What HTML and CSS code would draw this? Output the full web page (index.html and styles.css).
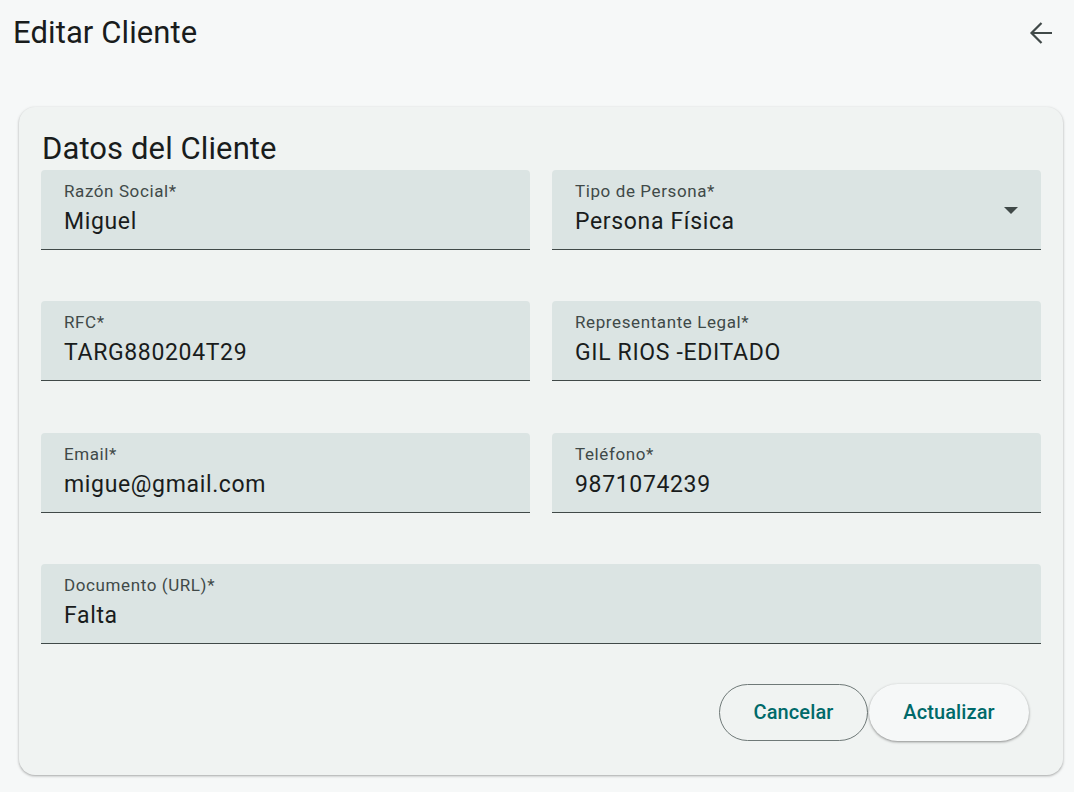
FILE: index.html
```html
<!DOCTYPE html>
<html lang="es">
<head>
<meta charset="utf-8">
<title>Editar Cliente</title>
<link rel="stylesheet" href="styles.css">
</head>
<body>
<header class="topbar">
  <h1 class="title">Editar Cliente</h1>
  <button class="icon-btn" aria-label="Regresar">
    <svg width="24" height="24" viewBox="0 0 24 24"><path d="M23 12H2.5M12.5 2L2.5 12l10 10" fill="none" stroke="#404948" stroke-width="2.2"/></svg>
  </button>
</header>
<main class="card">
  <h2 class="card-title">Datos del Cliente</h2>
  <div class="grid">
    <div class="field">
      <span class="label">Razón Social*</span>
      <span class="value">Miguel</span>
    </div>
    <div class="field select">
      <span class="label">Tipo de Persona*</span>
      <span class="value">Persona Física</span>
      <svg class="caret" width="14" height="8" viewBox="0 0 14 8"><path d="M0 0h14L7 7z" fill="#404948"/></svg>
    </div>
    <div class="field">
      <span class="label">RFC*</span>
      <span class="value">TARG880204T29</span>
    </div>
    <div class="field">
      <span class="label">Representante Legal*</span>
      <span class="value">GIL RIOS -EDITADO</span>
    </div>
    <div class="field">
      <span class="label">Email*</span>
      <span class="value">migue@gmail.com</span>
    </div>
    <div class="field">
      <span class="label">Teléfono*</span>
      <span class="value">9871074239</span>
    </div>
    <div class="field wide">
      <span class="label">Documento (URL)*</span>
      <span class="value">Falta</span>
    </div>
  </div>
  <div class="actions">
    <button class="btn outlined">Cancelar</button>
    <button class="btn elevated">Actualizar</button>
  </div>
</main>
</body>
</html>
```
FILE: styles.css
```css
* { box-sizing: border-box; }
html, body { margin: 0; padding: 0; }
body {
  background: #f6f8f8;
  font-family: Roboto, "Liberation Sans", sans-serif;
  color: #191c1c;
  width: 1074px;
  height: 792px;
  overflow: hidden;
}
.topbar {
  height: 66px;
  display: flex;
  align-items: center;
  justify-content: space-between;
  padding: 0 21px 0 13px;
}
.title {
  margin: 0;
  font-size: 31px;
  font-weight: 400;
  line-height: 40px;
  letter-spacing: 0.1px;
}
.icon-btn {
  border: 0;
  background: transparent;
  padding: 0;
  width: 24px;
  height: 24px;
  display: flex;
}
.card {
  margin: 41px 11px 0 19px;
  background: #f0f3f2;
  border-radius: 16px;
  box-shadow: 0 1px 3px rgba(0,0,0,0.25), 0 1px 2px rgba(0,0,0,0.1);
  padding: 24px 22px 0 22px;
  height: 668px;
}
.card-title {
  margin: 0 0 0 1px;
  font-size: 31px;
  font-weight: 400;
  line-height: 36px;
  letter-spacing: 0.1px;
}
.grid {
  display: grid;
  grid-template-columns: 1fr 1fr;
  column-gap: 22px;
  row-gap: 51.33px;
  margin-top: 3px;
}
.field {
  position: relative;
  height: 80px;
  background: #dbe4e3;
  border-radius: 4px 4px 0 0;
  border-bottom: 1px solid #404948;
  padding: 10px 23px 0 23px;
  display: flex;
  flex-direction: column;
}
.field.wide { grid-column: 1 / span 2; }
.label {
  font-size: 17px;
  line-height: 22px;
  color: #404948;
  letter-spacing: 0.6px;
}
.value {
  font-size: 23px;
  line-height: 30px;
  margin-top: 5px;
  letter-spacing: 0.65px;
  color: #191c1c;
}
.caret {
  position: absolute;
  right: 23px;
  top: 37px;
}
.actions {
  display: flex;
  justify-content: flex-end;
  gap: 1px;
  margin-top: 40px;
  padding-right: 12px;
}
.btn {
  height: 57px;
  border-radius: 29px;
  font-family: Roboto, "Liberation Sans", sans-serif;
  font-size: 20px;
  font-weight: 500;
  color: #006a6a;
  letter-spacing: 0.1px;
  cursor: pointer;
}
.btn.outlined {
  width: 149px;
  background: transparent;
  border: 1px solid #6f7978;
}
.btn.elevated {
  width: 160px;
  background: #f6f8f8;
  border: 0;
  box-shadow: 0 1px 3px rgba(0,0,0,0.3), 0 1px 2px rgba(0,0,0,0.15);
}
```
